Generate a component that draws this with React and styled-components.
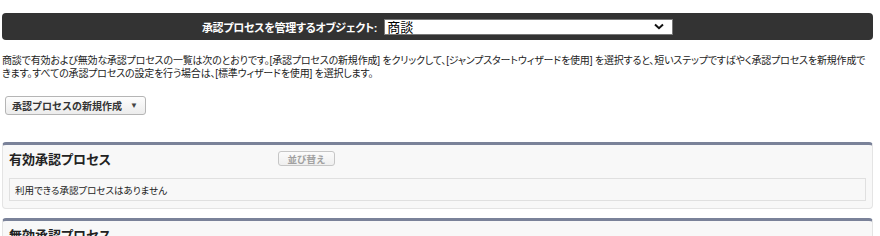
import React from "react";
import styled, { createGlobalStyle } from "styled-components";

const Global = createGlobalStyle`
  html, body { margin: 0; padding: 0; background: #fff; }
  body {
    font-family: Arial, "Liberation Sans", "Noto Sans CJK JP", sans-serif;
    color: #222;
    font-feature-settings: "palt";
  }
`;

const Page = styled.div`
  padding: 13px 7px 0 2px;
  display: flex;
  flex-direction: column;
`;

const ObjectBar = styled.div`
  height: 27px;
  background: #333333;
  border-radius: 4px;
  display: flex;
  align-items: center;
  justify-content: center;
  gap: 7px;
`;

const BarLabel = styled.label`
  color: #fff;
  font-weight: bold;
  font-size: 11px;
  letter-spacing: -0.3px;
`;

const ObjectSelect = styled.div`
  width: 289px;
  height: 16px;
  box-sizing: border-box;
  background: #fff;
  border: 1px solid #777;
  display: flex;
  align-items: center;
  justify-content: space-between;
  padding: 0 8px 0 2px;
  font-size: 13px;
  color: #000;
`;

const Intro = styled.p`
  margin: 14px 0 0 0;
  font-size: 10px;
  line-height: 13px;
  letter-spacing: -0.18px;
  color: #222;
`;

const MenuButton = styled.button`
  align-self: flex-start;
  margin: 16px 0 0 3px;
  height: 19px;
  box-sizing: border-box;
  padding: 0 7px 0 6px;
  border: 1px solid #b5b5b5;
  border-radius: 3px;
  background: linear-gradient(#fdfdfd, #ececec);
  font-family: inherit;
  font-size: 10px;
  font-weight: bold;
  color: #333;
  display: flex;
  align-items: center;
  gap: 8px;
`;

const Caret = styled.span`
  font-size: 8px;
  color: #444;
`;

const Block = styled.section`
  margin-top: ${(p) => p.$top}px;
  background: #f8f8f8;
  border: 1px solid #e4e4e4;
  border-top: 3px solid #7a8299;
  border-radius: 4px;
  padding: 0 6px 7px 6px;
  display: flex;
  flex-direction: column;
`;

const BlockHeader = styled.div`
  height: 27px;
  display: flex;
  align-items: center;
`;

const BlockTitle = styled.h2`
  margin: 0;
  width: 269px;
  font-size: 13px;
  font-weight: bold;
  color: #222;
`;

const SortButton = styled.button`
  width: 57px;
  height: 15px;
  box-sizing: border-box;
  padding: 0;
  border: 1px solid #c6c6c6;
  border-radius: 3px;
  background: linear-gradient(#fbfbfb, #efefef);
  font-family: inherit;
  font-size: 9.5px;
  font-weight: bold;
  color: #a0a0a0;
`;

const EmptyBox = styled.div`
  margin-top: 6px;
  height: 23px;
  box-sizing: border-box;
  border: 1px solid #e0e0e0;
  background: #f8f8f8;
  display: flex;
  align-items: center;
  padding-left: 5px;
  font-size: 9.5px;
  color: #222;
`;

export default function App() {
  return (
    <>
      <Global />
      <Page>
        <ObjectBar>
          <BarLabel>承認プロセスを管理するオブジェクト:</BarLabel>
          <ObjectSelect>
            <span>商談</span>
            <svg width="10" height="7" viewBox="0 0 10 7">
              <path d="M1 1.5 L5 5.2 L9 1.5" fill="none" stroke="#111" strokeWidth="2" />
            </svg>
          </ObjectSelect>
        </ObjectBar>
        <Intro>
          商談で有効および無効な承認プロセスの一覧は次のとおりです。[承認プロセスの新規作成] をクリックして、[ジャンプスタートウィザードを使用] を選択すると、短いステップですばやく承認プロセスを新規作成できます。すべての承認プロセスの設定を行う場合は、[標準ウィザードを使用] を選択します。
        </Intro>
        <MenuButton>
          承認プロセスの新規作成<Caret>▼</Caret>
        </MenuButton>
        <Block $top={27}>
          <BlockHeader>
            <BlockTitle>有効承認プロセス</BlockTitle>
            <SortButton>並び替え</SortButton>
          </BlockHeader>
          <EmptyBox>利用できる承認プロセスはありません</EmptyBox>
        </Block>
        <Block $top={9}>
          <BlockHeader>
            <BlockTitle>無効承認プロセス</BlockTitle>
          </BlockHeader>
        </Block>
      </Page>
    </>
  );
}
